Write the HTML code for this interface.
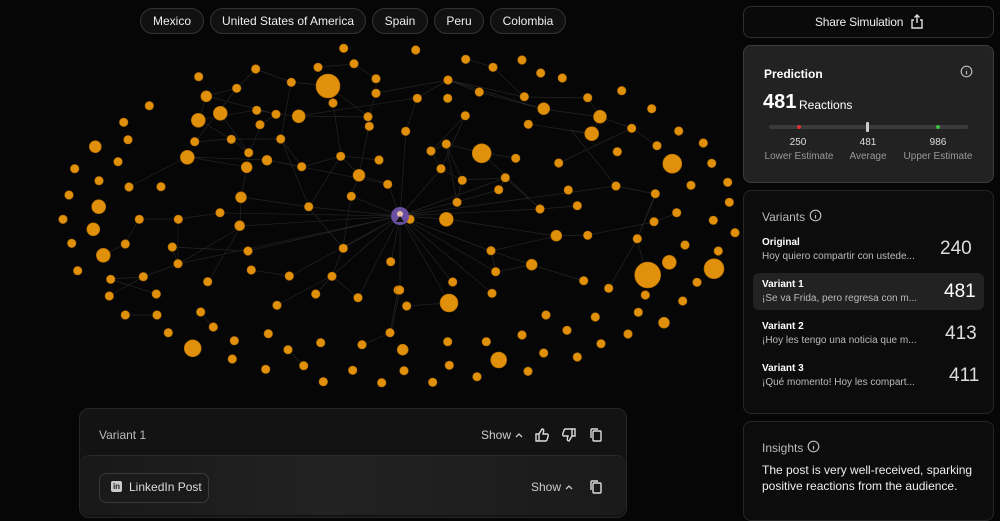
<!DOCTYPE html>
<html><head><meta charset="utf-8">
<style>
*{box-sizing:border-box;margin:0;padding:0}
body{width:1000px;height:501px;background:#060606;font-family:"Liberation Sans",sans-serif;color:#fff;position:relative;overflow:hidden}
.pill{position:absolute;top:8px;height:26px;border:1px solid #333;background:#111;border-radius:14px;font-size:12px;line-height:24px;text-align:center;color:#eee}
.card{position:absolute;border-radius:8px}
.ico{position:absolute}
</style></head><body>
<div class="pill" style="left:140px;width:64px">Mexico</div>
<div class="pill" style="left:210px;width:156px">United States of America</div>
<div class="pill" style="left:372px;width:56px">Spain</div>
<div class="pill" style="left:434px;width:50px">Peru</div>
<div class="pill" style="left:490px;width:76px">Colombia</div>

<svg width="740" height="400" style="position:absolute;left:0;top:0" >
<g stroke="#242424" stroke-width="0.7" fill="none">
<path d="M400 216L446 219L556 236L588 235L654 222L677 213M400 216L491 251L532 265L584 281M400 216L496 272M400 216L452 282M400 216L492 293M400 216L400 290L391 333M400 216L449 303L407 306M400 216L343 248L308 207M400 216L358 298M400 216L332 276L277 305M400 216L391 262M400 216L457 202L462 180L446 144L431 151M400 216L505 178L499 190M400 216L540 209L577 206M400 216L441 169L465 116M400 216L388 184L359 175L341 156M400 216L351 196L359 175M400 216L248 251L172 247M400 216L220 213L178 219L139 219L125 244L103 255M400 216L309 207L241 197L247 167L187 157L129 187M400 216L241 226L208 282M400 216L178 264L143 277L109 296M400 216L290 276L251 270M400 216L616 186L656 194L637 239L609 288M616 186L571 130L592 134L600 117L588 98L524 97L493 67L466 59M524 97L448 80L417 98L406 131L400 216M417 98L298 116L276 114L256 110L199 120L206 96L237 88L256 69M276 114L261 125L249 153L247 167L241 197L240 226M298 116L369 117L376 93L376 79L354 64L318 67M369 117L369 126L359 175M333 103L341 156L309 207M448 80L479 92L543 109L600 117L632 128L657 146M528 124L592 134M465 116L431 151L446 144L482 153L516 158M482 153L540 209M559 163L632 128M446 144L457 202M431 151L441 169L462 180M199 120L231 139L281 139L302 167L341 156L379 160M231 139L249 153M195 142L237 88M187 157L129 187M187 157L267 160L388 184M267 160L301 167M220 113L249 153M206 96L276 114M291 82L281 139L309 207M328 86L291 82L255 69M328 86L369 117M376 93L448 80L543 109M462 180L505 178L541 209M498 190L457 202M577 206L540 209M556 236L491 251L400 216M616 186L655 194L637 239L647 275M531 265L496 272L491 251M609 288L637 239M654 222L677 213M178 219L178 264L172 247M143 277L110 279L156 294M125 315L157 315M200 312L213 327M288 350L304 366M362 345L390 333L398 290M332 276L316 294M332 276L358 298M343 248L332 276M351 196L343 248M243 226L178 264M230 139L194 142"/>
</g>
<g fill="#e0900a" stroke="#b06c00" stroke-width="0.6">
<circle cx="343.7" cy="48.3" r="4.3"/><circle cx="354" cy="63.7" r="4.3"/><circle cx="318" cy="67.3" r="4.3"/><circle cx="328" cy="86" r="12"/><circle cx="291.3" cy="82.3" r="4.3"/><circle cx="255.7" cy="69" r="4.3"/><circle cx="198.7" cy="76.7" r="4.3"/><circle cx="236.7" cy="88.3" r="4.3"/><circle cx="206.3" cy="96.3" r="5.5"/><circle cx="376" cy="78.7" r="4.3"/><circle cx="376" cy="93.3" r="4.3"/><circle cx="333" cy="103" r="4.3"/><circle cx="220.3" cy="113.3" r="7"/><circle cx="198.3" cy="120.3" r="7"/><circle cx="256.7" cy="110.3" r="4.3"/><circle cx="276" cy="114.3" r="4.3"/><circle cx="298.7" cy="116.3" r="6.5"/><circle cx="260" cy="124.7" r="4.3"/><circle cx="368" cy="116.7" r="4.3"/><circle cx="369.3" cy="126.3" r="4.3"/><circle cx="149.3" cy="105.7" r="4.3"/><circle cx="123.7" cy="122.3" r="4.3"/><circle cx="128" cy="139.7" r="4.3"/><circle cx="95.3" cy="146.7" r="6"/><circle cx="194.7" cy="141.7" r="4.3"/><circle cx="231.3" cy="139.3" r="4.3"/><circle cx="280.7" cy="139" r="4.3"/><circle cx="187.3" cy="157.3" r="7"/><circle cx="248.7" cy="152.7" r="4.3"/><circle cx="267" cy="160.3" r="5"/><circle cx="246.7" cy="167.3" r="5.5"/><circle cx="301.7" cy="166.7" r="4.3"/><circle cx="340.7" cy="156.3" r="4.3"/><circle cx="379" cy="160" r="4.3"/><circle cx="359" cy="175.3" r="6"/><circle cx="387.7" cy="184.3" r="4.3"/><circle cx="74.7" cy="168.7" r="4.3"/><circle cx="118" cy="161.7" r="4.3"/><circle cx="99" cy="180.7" r="4.3"/><circle cx="129" cy="187" r="4.3"/><circle cx="161" cy="186.7" r="4.3"/><circle cx="69" cy="195" r="4.3"/><circle cx="98.7" cy="206.7" r="7"/><circle cx="241" cy="197.3" r="5.5"/><circle cx="351.3" cy="196.3" r="4.3"/><circle cx="308.7" cy="206.7" r="4.3"/><circle cx="220" cy="212.7" r="4.3"/><circle cx="63" cy="219.3" r="4.3"/><circle cx="93.3" cy="229.3" r="6.5"/><circle cx="139.3" cy="219.3" r="4.3"/><circle cx="178.3" cy="219.3" r="4.3"/><circle cx="239.7" cy="225.7" r="5"/><circle cx="71.7" cy="243.3" r="4.3"/><circle cx="125.3" cy="244" r="4.3"/><circle cx="172.3" cy="247" r="4.3"/><circle cx="103.3" cy="255.3" r="7"/><circle cx="248" cy="251" r="4.3"/><circle cx="343.3" cy="248.3" r="4.3"/><circle cx="390.7" cy="261.7" r="4.3"/><circle cx="77.7" cy="270.7" r="4.3"/><circle cx="178" cy="263.7" r="4.3"/><circle cx="110.7" cy="279.3" r="4.3"/><circle cx="143.3" cy="276.7" r="4.3"/><circle cx="251.3" cy="270" r="4.3"/><circle cx="289.3" cy="276" r="4.3"/><circle cx="332" cy="276.3" r="4.3"/><circle cx="207.7" cy="281.7" r="4.3"/><circle cx="109.3" cy="296" r="4.3"/><circle cx="156.3" cy="294" r="4.3"/><circle cx="315.7" cy="294" r="4.3"/><circle cx="358" cy="297.7" r="4.3"/><circle cx="277" cy="305.3" r="4.3"/><circle cx="125.3" cy="315" r="4.3"/><circle cx="157" cy="315" r="4.3"/><circle cx="200.7" cy="312" r="4.3"/><circle cx="213.3" cy="327" r="4.3"/><circle cx="168.3" cy="332.7" r="4.3"/><circle cx="192.7" cy="348.3" r="8.5"/><circle cx="234.3" cy="340.7" r="4.3"/><circle cx="268.3" cy="333.7" r="4.3"/><circle cx="232.3" cy="359" r="4.3"/><circle cx="288" cy="349.7" r="4.3"/><circle cx="303.7" cy="365.7" r="4.3"/><circle cx="320.7" cy="342.7" r="4.3"/><circle cx="265.7" cy="369.3" r="4.3"/><circle cx="323.3" cy="381.7" r="4.3"/><circle cx="352.7" cy="370.3" r="4.3"/><circle cx="362" cy="344.7" r="4.3"/><circle cx="381.7" cy="382.7" r="4.3"/><circle cx="390" cy="332.7" r="4.3"/><circle cx="398" cy="290" r="4.3"/>
<circle cx="415.7" cy="50" r="4.3"/><circle cx="465.7" cy="59.3" r="4.3"/><circle cx="493" cy="67.3" r="4.3"/><circle cx="522" cy="60" r="4.3"/><circle cx="540.7" cy="73" r="4.3"/><circle cx="562.3" cy="78" r="4.3"/><circle cx="448" cy="80" r="4.3"/><circle cx="417.3" cy="98.3" r="4.3"/><circle cx="447.7" cy="98.3" r="4.3"/><circle cx="479.3" cy="92" r="4.3"/><circle cx="524.3" cy="96.7" r="4.3"/><circle cx="543.7" cy="108.7" r="6"/><circle cx="587.7" cy="97.7" r="4.3"/><circle cx="621.7" cy="90.7" r="4.3"/><circle cx="600" cy="116.7" r="6.5"/><circle cx="591.7" cy="133.7" r="7"/><circle cx="651.7" cy="108.7" r="4.3"/><circle cx="465.3" cy="115.7" r="4.3"/><circle cx="528.3" cy="124.3" r="4.3"/><circle cx="405.7" cy="131.3" r="4.3"/><circle cx="446.3" cy="144" r="4.3"/><circle cx="431" cy="151" r="4.3"/><circle cx="481.7" cy="153.3" r="9.5"/><circle cx="515.7" cy="158.3" r="4.3"/><circle cx="558.7" cy="163" r="4.3"/><circle cx="631.7" cy="128.3" r="4.3"/><circle cx="657" cy="145.7" r="4.3"/><circle cx="678.7" cy="131" r="4.3"/><circle cx="617.3" cy="151.7" r="4.3"/><circle cx="672.3" cy="163.7" r="9.5"/><circle cx="703.3" cy="143" r="4.3"/><circle cx="711.7" cy="163.3" r="4.3"/><circle cx="441" cy="168.7" r="4.3"/><circle cx="462.3" cy="180.3" r="4.3"/><circle cx="505.3" cy="177.7" r="4.3"/><circle cx="498.7" cy="189.7" r="4.3"/><circle cx="568.3" cy="190" r="4.3"/><circle cx="457" cy="202.3" r="4.3"/><circle cx="540" cy="209" r="4.3"/><circle cx="577.3" cy="205.7" r="4.3"/><circle cx="616" cy="186" r="4.3"/><circle cx="655.3" cy="193.7" r="4.3"/><circle cx="691" cy="185.3" r="4.3"/><circle cx="727.7" cy="182.3" r="4.3"/><circle cx="729.3" cy="202.3" r="4.3"/><circle cx="410" cy="219.3" r="4.3"/><circle cx="446.3" cy="219.3" r="7"/><circle cx="556.3" cy="235.7" r="5.5"/><circle cx="587.7" cy="235.3" r="4.3"/><circle cx="654" cy="221.7" r="4.3"/><circle cx="676.7" cy="212.7" r="4.3"/><circle cx="713.3" cy="220.3" r="4.3"/><circle cx="735" cy="232.7" r="4.3"/><circle cx="637.3" cy="238.7" r="4.3"/><circle cx="491" cy="250.7" r="4.3"/><circle cx="685" cy="245" r="4.3"/><circle cx="718.3" cy="251" r="4.3"/><circle cx="531.7" cy="264.7" r="5.5"/><circle cx="495.7" cy="271.7" r="4.3"/><circle cx="669.3" cy="262.3" r="7"/><circle cx="647.7" cy="275" r="13"/><circle cx="714" cy="268.7" r="10"/><circle cx="452.7" cy="282" r="4.3"/><circle cx="399.7" cy="290" r="4.3"/><circle cx="492" cy="293.3" r="4.3"/><circle cx="583.7" cy="280.7" r="4.3"/><circle cx="608.7" cy="288.3" r="4.3"/><circle cx="645.3" cy="295" r="4.3"/><circle cx="697" cy="282.3" r="4.3"/><circle cx="449" cy="303" r="9"/><circle cx="406.7" cy="306" r="4.3"/><circle cx="682.7" cy="301" r="4.3"/><circle cx="546" cy="315" r="4.3"/><circle cx="595.3" cy="317" r="4.3"/><circle cx="638.3" cy="312.3" r="4.3"/><circle cx="664" cy="322.7" r="5.5"/><circle cx="402.7" cy="349.7" r="5.5"/><circle cx="447.7" cy="341.7" r="4.3"/><circle cx="486.3" cy="341.7" r="4.3"/><circle cx="522" cy="335" r="4.3"/><circle cx="567" cy="330.3" r="4.3"/><circle cx="628" cy="334" r="4.3"/><circle cx="601" cy="343.7" r="4.3"/><circle cx="498.7" cy="360" r="8"/><circle cx="543.7" cy="353" r="4.3"/><circle cx="577.3" cy="357" r="4.3"/><circle cx="404" cy="370.7" r="4.3"/><circle cx="449.3" cy="365.3" r="4.3"/><circle cx="477" cy="376.7" r="4.3"/><circle cx="528" cy="371.3" r="4.3"/><circle cx="432.7" cy="382.3" r="4.3"/>
</g>
<circle cx="400" cy="216" r="9" fill="#6a4fa0"/>
<circle cx="400" cy="214" r="3" fill="#e8c0a8"/>
<path d="M396 222 L400 216 L404 222Z" fill="#111"/>
</svg>

<!-- bottom panel -->
<div class="card" style="left:79px;top:408px;width:548px;height:110px;background:#131313;border:1px solid #262626;border-radius:10px"></div>
<div style="position:absolute;left:99px;top:428px;font-size:12px;color:#bbb">Variant 1</div>
<div style="position:absolute;left:481px;top:428px;font-size:12px;color:#ccc">Show</div>
<svg class="ico" style="left:514px;top:430px" width="10" height="10"><path d="M2 7L5 4L8 7" stroke="#ccc" stroke-width="1.3" fill="none"/></svg>
<svg class="ico" style="left:534px;top:427px" width="16" height="16" fill="none" stroke="#ddd" stroke-width="1.4"><path d="M2 7h3v7H2zM5 7l3-5c1.5 0 2 1 1.6 2.5L9 7h4c1 0 1.5 1 1.2 2l-1.3 4c-.3.7-.8 1-1.5 1H5"/></svg>
<svg class="ico" style="left:561px;top:427px" width="16" height="16" fill="none" stroke="#ddd" stroke-width="1.4"><path d="M14 9h-3V2h3zM11 9l-3 5c-1.5 0-2-1-1.6-2.5L7 9H3c-1 0-1.5-1-1.2-2l1.3-4c.3-.7.8-1 1.5-1H11"/></svg>
<svg class="ico" style="left:588px;top:427px" width="16" height="16" fill="none" stroke="#ddd" stroke-width="1.4"><rect x="5" y="4" width="8" height="10" rx="1"/><path d="M3 11V3c0-.6.4-1 1-1h6"/></svg>
<div class="card" style="left:80px;top:455px;width:546px;height:60px;background:linear-gradient(90deg,#181818,#222 45%,#1a1a1a);border-top:1px solid #2a2a2a;border-radius:10px"></div>
<div style="position:absolute;left:99px;top:473px;width:110px;height:30px;border:1px solid #3a3a3a;border-radius:7px;background:#1a1a1a"></div>
<div style="position:absolute;left:111px;top:481px;width:11px;height:11px;background:#ccc;border-radius:2px;color:#1a1a1a;font-size:8px;font-weight:bold;line-height:11px;text-align:center">in</div>
<div style="position:absolute;left:129px;top:480px;font-size:12px;color:#ddd">LinkedIn Post</div>
<div style="position:absolute;left:531px;top:480px;font-size:12px;color:#ccc">Show</div>
<svg class="ico" style="left:564px;top:482px" width="10" height="10"><path d="M2 7L5 4L8 7" stroke="#ccc" stroke-width="1.3" fill="none"/></svg>
<svg class="ico" style="left:588px;top:479px" width="16" height="16" fill="none" stroke="#ddd" stroke-width="1.4"><rect x="5" y="4" width="8" height="10" rx="1"/><path d="M3 11V3c0-.6.4-1 1-1h6"/></svg>

<!-- right column -->
<div class="card" style="left:743px;top:6px;width:251px;height:32px;border:1px solid #2e2e2e;background:#0a0a0a"></div>
<div style="position:absolute;left:815px;top:15px;font-size:12px;line-height:14px;color:#eee;letter-spacing:-0.2px">Share Simulation</div>
<svg class="ico" style="left:910px;top:14px" width="14" height="15" fill="none" stroke="#ddd" stroke-width="1.4"><path d="M4 6H2v8h10V6h-2M7 9V1M4.5 3.5L7 1l2.5 2.5"/></svg>

<div class="card" style="left:743px;top:45px;width:251px;height:138px;background:#222;border:1px solid #3c3c3c"></div>
<div style="position:absolute;left:764px;top:67px;font-size:12px;font-weight:bold">Prediction</div>
<svg class="ico" style="left:960px;top:65px" width="13" height="13" fill="none" stroke="#bbb" stroke-width="1.2"><circle cx="6.5" cy="6.5" r="5.3"/><path d="M6.5 6v3.5M6.5 3.8v.4"/></svg>
<div style="position:absolute;left:763px;top:91px;font-size:20px;font-weight:bold">481</div>
<div style="position:absolute;left:799px;top:98px;font-size:12px">Reactions</div>
<div style="position:absolute;left:769px;top:125px;width:199px;height:4px;border-radius:2px;background:#3a3a3a"></div>
<div style="position:absolute;left:797px;top:125px;width:4px;height:4px;border-radius:2px;background:#e03030"></div>
<div style="position:absolute;left:936px;top:125px;width:4px;height:4px;border-radius:2px;background:#3cbb3c"></div>
<div style="position:absolute;left:866px;top:122px;width:3px;height:10px;border-radius:1px;background:#ccc"></div>
<div style="position:absolute;left:768px;top:137px;width:60px;text-align:center;font-size:10px;color:#ddd">250</div>
<div style="position:absolute;left:758px;top:151px;width:82px;text-align:center;font-size:10px;color:#999">Lower Estimate</div>
<div style="position:absolute;left:840px;top:137px;width:56px;text-align:center;font-size:10px;color:#ddd">481</div>
<div style="position:absolute;left:840px;top:151px;width:56px;text-align:center;font-size:10px;color:#999">Average</div>
<div style="position:absolute;left:908px;top:137px;width:60px;text-align:center;font-size:10px;color:#ddd">986</div>
<div style="position:absolute;left:898px;top:151px;width:80px;text-align:center;font-size:10px;color:#999">Upper Estimate</div>

<div class="card" style="left:743px;top:190px;width:251px;height:224px;background:#0c0c0c;border:1px solid #262626"></div>
<div style="position:absolute;left:762px;top:210px;font-size:12px;color:#bbb">Variants</div>
<svg class="ico" style="left:809px;top:209px" width="13" height="13" fill="none" stroke="#bbb" stroke-width="1.2"><circle cx="6.5" cy="6.5" r="5.3"/><path d="M6.5 6v3.5M6.5 3.8v.4"/></svg>
<div style="position:absolute;left:753px;top:273px;width:231px;height:37px;border-radius:6px;background:#222"></div>
<div style="position:absolute;left:762px;top:237px;font-size:10px;font-weight:bold">Original</div>
<div style="position:absolute;left:762px;top:251px;font-size:10px;color:#bbb">Hoy quiero compartir con ustede...</div>
<div style="position:absolute;left:940px;top:238px;font-size:19px;color:#ddd">240</div>
<div style="position:absolute;left:762px;top:279px;font-size:10px;font-weight:bold">Variant 1</div>
<div style="position:absolute;left:762px;top:293px;font-size:10px;color:#bbb">¡Se va Frida, pero regresa con m...</div>
<div style="position:absolute;left:944px;top:281px;font-size:19px;color:#fff">481</div>
<div style="position:absolute;left:762px;top:321px;font-size:10px;font-weight:bold">Variant 2</div>
<div style="position:absolute;left:762px;top:335px;font-size:10px;color:#bbb">¡Hoy les tengo una noticia que m...</div>
<div style="position:absolute;left:945px;top:323px;font-size:19px;color:#ddd">413</div>
<div style="position:absolute;left:762px;top:363px;font-size:10px;font-weight:bold">Variant 3</div>
<div style="position:absolute;left:762px;top:377px;font-size:10px;color:#bbb">¡Qué momento! Hoy les compart...</div>
<div style="position:absolute;left:949px;top:365px;font-size:19px;color:#ddd">411</div>

<div class="card" style="left:743px;top:421px;width:251px;height:100px;background:#0c0c0c;border:1px solid #262626"></div>
<div style="position:absolute;left:762px;top:441px;font-size:12px;color:#bbb">Insights</div>
<svg class="ico" style="left:807px;top:440px" width="13" height="13" fill="none" stroke="#bbb" stroke-width="1.2"><circle cx="6.5" cy="6.5" r="5.3"/><path d="M6.5 6v3.5M6.5 3.8v.4"/></svg>
<div style="position:absolute;left:762px;top:462px;width:215px;font-size:12px;line-height:16px;color:#eee">The post is very well-received, sparking positive reactions from the audience.</div>
</body></html>
